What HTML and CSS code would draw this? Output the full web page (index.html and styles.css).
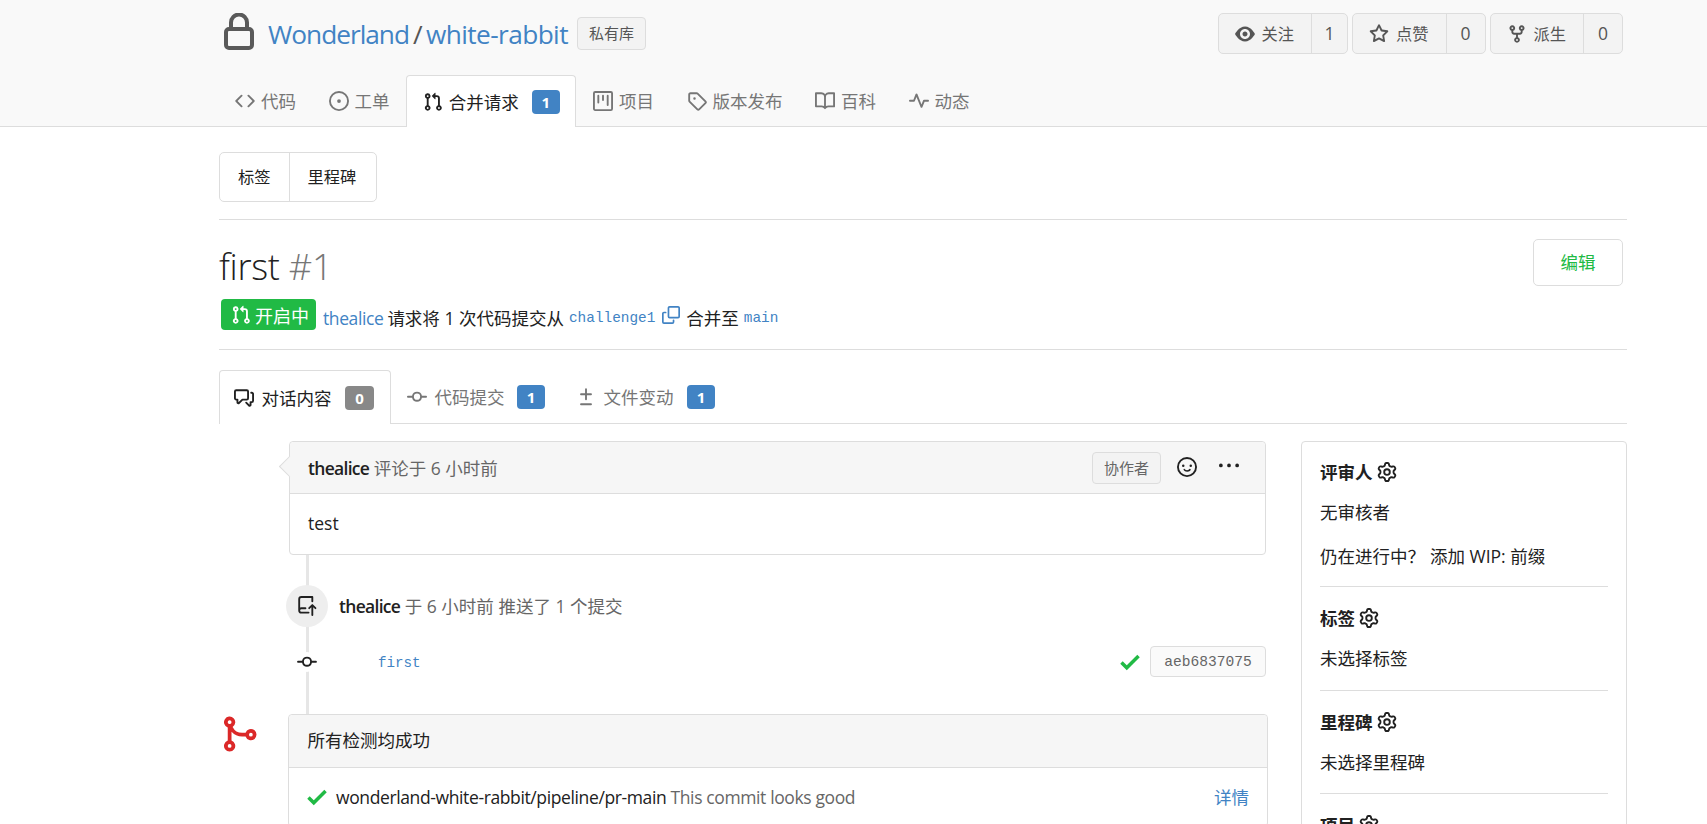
FILE: index.html
```html
<!DOCTYPE html>
<html lang="zh-CN">
<head>
    <meta charset="UTF-8">
    <meta name="viewport" content="width=device-width, initial-scale=1.0">
    <title>first #1 - Wonderland/white-rabbit</title>
    <link rel="stylesheet" href="styles.css">
</head>
<body>
    <svg class="sprite" xmlns="http://www.w3.org/2000/svg">
        <symbol id="i-eye" viewBox="0 0 16 16"><path d="M8.06 2C3 2 0 8 0 8s3 6 8.06 6C13 14 16 8 16 8s-3-6-7.94-6zM8 12c-2.2 0-4-1.78-4-4 0-2.2 1.8-4 4-4 2.22 0 4 1.8 4 4 0 2.22-1.78 4-4 4zm2-4c0 1.11-.89 2-2 2-1.11 0-2-.89-2-2 0-1.11.89-2 2-2 1.11 0 2 .89 2 2z"/></symbol>
        <symbol id="i-star" viewBox="0 0 16 16"><path d="M8 .25a.75.75 0 01.673.418l1.882 3.815 4.21.612a.75.75 0 01.416 1.279l-3.046 2.97.719 4.192a.75.75 0 01-1.088.791L8 12.347l-3.766 1.98a.75.75 0 01-1.088-.79l.72-4.194L.818 6.374a.75.75 0 01.416-1.28l4.21-.611L7.327.668A.75.75 0 018 .25zm0 2.445L6.615 5.5a.75.75 0 01-.564.41l-3.097.45 2.24 2.184a.75.75 0 01.216.664l-.528 3.084 2.769-1.456a.75.75 0 01.698 0l2.77 1.456-.53-3.084a.75.75 0 01.216-.664l2.24-2.183-3.096-.45a.75.75 0 01-.564-.41L8 2.694v.001z"/></symbol>
        <symbol id="i-fork" viewBox="0 0 16 16"><path d="M5 3.25a.75.75 0 11-1.5 0 .75.75 0 011.5 0zm0 2.122a2.25 2.25 0 10-1.5 0v.878A2.25 2.25 0 005.75 8.5h1.5v2.128a2.251 2.251 0 101.5 0V8.5h1.5a2.25 2.25 0 002.25-2.25v-.878a2.25 2.25 0 10-1.5 0v.878a.75.75 0 01-.75.75h-4.5A.75.75 0 015 6.25v-.878zm3.75 7.378a.75.75 0 11-1.5 0 .75.75 0 011.5 0zm3-8.75a.75.75 0 100-1.5.75.75 0 000 1.5z"/></symbol>
        <symbol id="i-code" viewBox="0 0 16 16"><path d="M4.72 3.22a.75.75 0 011.06 1.06L2.06 8l3.72 3.72a.75.75 0 11-1.06 1.06L.47 8.53a.75.75 0 010-1.06l4.25-4.25zm6.56 0a.75.75 0 10-1.06 1.06L13.94 8l-3.72 3.72a.75.75 0 101.06 1.06l4.25-4.25a.75.75 0 000-1.06l-4.25-4.25z"/></symbol>
        <symbol id="i-issue" viewBox="0 0 16 16"><path d="M8 9.5a1.5 1.5 0 100-3 1.5 1.5 0 000 3z"/><path d="M8 0a8 8 0 100 16A8 8 0 008 0zM1.5 8a6.5 6.5 0 1113 0 6.5 6.5 0 01-13 0z"/></symbol>
        <symbol id="i-pr" viewBox="0 0 16 16"><path d="M7.177 3.073L9.573.677A.25.25 0 0110 .854v4.792a.25.25 0 01-.427.177L7.177 3.427a.25.25 0 010-.354zM3.75 2.5a.75.75 0 100 1.5.75.75 0 000-1.5zm-2.25.75a2.25 2.25 0 113 2.122v5.256a2.251 2.251 0 11-1.5 0V5.372A2.25 2.25 0 011.5 3.25zM11 2.5h-1V4h1a1 1 0 011 1v5.628a2.251 2.251 0 101.5 0V5A2.5 2.5 0 0011 2.5zm1 10.25a.75.75 0 111.5 0 .75.75 0 01-1.5 0zM3.75 12a.75.75 0 100 1.5.75.75 0 000-1.5z"/></symbol>
        <symbol id="i-project" viewBox="0 0 16 16"><path d="M1.75 0A1.75 1.75 0 000 1.75v12.5C0 15.216.784 16 1.75 16h12.5A1.75 1.75 0 0016 14.25V1.75A1.75 1.75 0 0014.25 0H1.75zM1.5 1.75a.25.25 0 01.25-.25h12.5a.25.25 0 01.25.25v12.5a.25.25 0 01-.25.25H1.75a.25.25 0 01-.25-.25V1.75zM11.75 3a.75.75 0 00-.75.75v7.5a.75.75 0 001.5 0v-7.5a.75.75 0 00-.75-.75zm-8.25.75a.75.75 0 011.5 0v5.5a.75.75 0 01-1.5 0v-5.5zM8 3a.75.75 0 00-.75.75v3.5a.75.75 0 001.5 0v-3.5A.75.75 0 008 3z"/></symbol>
        <symbol id="i-tag" viewBox="0 0 16 16"><path d="M2.5 7.775V2.75a.25.25 0 01.25-.25h5.025a.25.25 0 01.177.073l6.25 6.25a.25.25 0 010 .354l-5.025 5.025a.25.25 0 01-.354 0l-6.25-6.25a.25.25 0 01-.073-.177zm-1.5 0V2.75C1 1.784 1.784 1 2.75 1h5.025c.464 0 .91.184 1.238.513l6.25 6.25a1.75 1.75 0 010 2.474l-5.026 5.026a1.75 1.75 0 01-2.474 0l-6.25-6.25A1.75 1.75 0 011 7.775zM6 5a1 1 0 100 2 1 1 0 000-2z"/></symbol>
        <symbol id="i-book" viewBox="0 0 16 16"><path d="M0 1.75A.75.75 0 01.75 1h4.253c1.227 0 2.317.59 3 1.501A3.744 3.744 0 0111.006 1h4.245a.75.75 0 01.75.75v10.5a.75.75 0 01-.75.75h-4.507a2.25 2.25 0 00-1.591.659l-.622.621a.75.75 0 01-1.06 0l-.622-.621A2.25 2.25 0 005.258 13H.75a.75.75 0 01-.75-.75V1.75zm8.755 3a2.25 2.25 0 012.25-2.25H14.5v9h-3.757c-.71 0-1.4.201-1.992.572l.004-7.322zm-1.504 7.324l.004-5.073-.002-2.253A2.25 2.25 0 005.003 2.5H1.5v9h3.757a3.75 3.75 0 011.994.574z"/></symbol>
        <symbol id="i-pulse" viewBox="0 0 16 16"><path d="M6 2a.75.75 0 01.696.471L10 10.731l1.304-3.26A.75.75 0 0112 7h3.25a.75.75 0 010 1.5h-2.742l-1.812 4.528a.75.75 0 01-1.392 0L6 4.77 4.696 8.03A.75.75 0 014 8.5H.75a.75.75 0 010-1.5h2.742l1.812-4.529A.75.75 0 016 2z"/></symbol>
        <symbol id="i-copy" viewBox="0 0 16 16"><path d="M0 6.75C0 5.784.784 5 1.75 5h1.5a.75.75 0 010 1.5h-1.5a.25.25 0 00-.25.25v7.5c0 .138.112.25.25.25h7.5a.25.25 0 00.25-.25v-1.5a.75.75 0 011.5 0v1.5A1.75 1.75 0 019.25 16h-7.5A1.75 1.75 0 010 14.25v-7.5z"/><path d="M5 1.75C5 .784 5.784 0 6.75 0h7.5C15.216 0 16 .784 16 1.75v7.5A1.75 1.75 0 0114.25 11h-7.5A1.75 1.75 0 015 9.25v-7.5zm1.75-.25a.25.25 0 00-.25.25v7.5c0 .138.112.25.25.25h7.5a.25.25 0 00.25-.25v-7.5a.25.25 0 00-.25-.25h-7.5z"/></symbol>
        <symbol id="i-discussion" viewBox="0 0 16 16"><path d="M1.5 2.75a.25.25 0 01.25-.25h8.5a.25.25 0 01.25.25v5.5a.25.25 0 01-.25.25h-3.5a.75.75 0 00-.53.22L3.5 11.44V9.25a.75.75 0 00-.75-.75h-1a.25.25 0 01-.25-.25v-5.5zM1.75 1A1.75 1.75 0 000 2.75v5.5C0 9.216.784 10 1.75 10H2v1.543a1.457 1.457 0 002.487 1.03L7.061 10h3.189A1.75 1.75 0 0012 8.25v-5.5A1.75 1.75 0 0010.25 1h-8.5zM14.5 4.75a.25.25 0 00-.25-.25h-.5a.75.75 0 110-1.5h.5c.966 0 1.75.784 1.75 1.75v5.5A1.75 1.75 0 0114.25 12H14v1.543a1.457 1.457 0 01-2.487 1.03L9.22 12.28a.75.75 0 111.06-1.06l2.22 2.22v-2.19a.75.75 0 01.75-.75h1a.25.25 0 00.25-.25v-5.5z"/></symbol>
        <symbol id="i-commit" viewBox="0 0 16 16"><path d="M10.5 7.75a2.5 2.5 0 11-5 0 2.5 2.5 0 015 0zm1.43.75a4.002 4.002 0 01-7.86 0H.75a.75.75 0 110-1.5h3.32a4.001 4.001 0 017.86 0h3.32a.75.75 0 110 1.5h-3.32z"/></symbol>
        <symbol id="i-diff" viewBox="0 0 16 16"><path d="M8.75 1.75a.75.75 0 00-1.5 0V5H4a.75.75 0 000 1.5h3.25v3.25a.75.75 0 001.5 0V6.5H12A.75.75 0 0012 5H8.75V1.75zM4 13a.75.75 0 000 1.5h8a.75.75 0 100-1.5H4z"/></symbol>
        <symbol id="i-smiley" viewBox="0 0 16 16"><path d="M1.5 8a6.5 6.5 0 1113 0 6.5 6.5 0 01-13 0zM8 0a8 8 0 100 16A8 8 0 008 0zM5 8a1 1 0 100-2 1 1 0 000 2zm7-1a1 1 0 11-2 0 1 1 0 012 0zM5.32 9.636a.75.75 0 011.038.175l.007.009c.103.118.22.222.35.31.264.178.683.37 1.285.37.602 0 1.02-.192 1.285-.371.13-.088.247-.192.35-.31l.007-.008a.75.75 0 111.222.87c-.16.166-.338.316-.53.445-.63.418-1.37.638-2.127.629-.946 0-1.652-.308-2.126-.63a3.32 3.32 0 01-.715-.657.75.75 0 01.183-1.044z"/></symbol>
        <symbol id="i-kebab" viewBox="0 0 16 16"><path d="M8 9a1.5 1.5 0 100-3 1.5 1.5 0 000 3zM1.5 9a1.5 1.5 0 100-3 1.5 1.5 0 000 3zm13 0a1.5 1.5 0 100-3 1.5 1.5 0 000 3z"/></symbol>
        <symbol id="i-gear" viewBox="0 0 16 16"><path d="M7.429 1.525a6.593 6.593 0 011.142 0c.036.003.108.036.137.146l.289 1.105c.147.56.55.967.997 1.189.174.086.341.183.501.29.417.278.97.423 1.53.27l1.102-.303c.11-.03.175.016.195.046.219.31.41.641.573.989.014.031.022.11-.059.19l-.815.806c-.411.406-.562.957-.53 1.456a4.588 4.588 0 010 .582c-.032.499.119 1.05.53 1.456l.815.806c.08.08.073.159.059.19a6.494 6.494 0 01-.573.99c-.02.029-.086.074-.195.045l-1.103-.303c-.559-.153-1.112-.008-1.529.27-.16.107-.327.204-.5.29-.449.222-.851.628-.998 1.189l-.289 1.105c-.029.11-.101.143-.137.146a6.613 6.613 0 01-1.142 0c-.036-.003-.108-.037-.137-.146l-.289-1.105c-.147-.56-.55-.967-.997-1.189a4.502 4.502 0 01-.501-.29c-.417-.278-.97-.423-1.53-.27l-1.102.303c-.11.03-.175-.016-.195-.046a6.492 6.492 0 01-.573-.989c-.014-.031-.022-.11.059-.19l.815-.806c.411-.406.562-.957.53-1.456a4.587 4.587 0 010-.582c.032-.499-.119-1.05-.53-1.456l-.815-.806c-.08-.08-.073-.159-.059-.19a6.44 6.44 0 01.573-.99c.02-.029.086-.075.195-.045l1.103.303c.559.153 1.112.008 1.529-.27.16-.107.327-.204.5-.29.449-.222.851-.628.998-1.189l.289-1.105c.029-.11.101-.143.137-.146zM8 0c-.236 0-.47.01-.701.03-.743.065-1.29.615-1.458 1.261l-.29 1.106c-.017.066-.078.158-.211.224a5.994 5.994 0 00-.668.386c-.123.082-.233.09-.3.071L3.27 2.776c-.644-.177-1.392.02-1.82.63a7.977 7.977 0 00-.704 1.217c-.315.675-.111 1.422.363 1.891l.815.806c.05.048.098.147.088.294a6.084 6.084 0 000 .772c.01.147-.038.246-.088.294l-.815.806c-.474.469-.678 1.216-.363 1.891.2.428.436.835.704 1.218.428.609 1.176.806 1.82.63l1.103-.303c.066-.019.176-.011.299.071.213.143.436.272.668.386.133.066.194.158.212.224l.289 1.106c.169.646.715 1.196 1.458 1.26a8.094 8.094 0 001.402 0c.743-.064 1.29-.614 1.458-1.26l.29-1.106c.017-.066.078-.158.211-.224a5.98 5.98 0 00.668-.386c.123-.082.233-.09.3-.071l1.102.302c.644.177 1.392-.02 1.82-.63.268-.382.505-.789.704-1.217.315-.675.111-1.422-.364-1.891l-.814-.806c-.05-.048-.098-.147-.088-.294a6.1 6.1 0 000-.772c-.01-.147.039-.246.088-.294l.814-.806c.475-.469.679-1.216.364-1.891a7.992 7.992 0 00-.704-1.218c-.428-.609-1.176-.806-1.82-.63l-1.103.303c-.066.019-.176.011-.299-.071a5.991 5.991 0 00-.668-.386c-.133-.066-.194-.158-.212-.224L10.16 1.29C9.99.645 9.444.095 8.701.031A8.094 8.094 0 008 0zm1.5 8a1.5 1.5 0 11-3 0 1.5 1.5 0 013 0zM11 8a3 3 0 11-6 0 3 3 0 016 0z"/></symbol>
        <symbol id="i-check" viewBox="0 0 12 16"><path d="M12 5l-8 8-4-4 1.5-1.5L4 10l6.5-6.5L12 5z"/></symbol>
        <symbol id="i-push" viewBox="0 0 16 16"><path d="M1 2.5A2.5 2.5 0 013.5 0h8.75a.75.75 0 01.75.75v3.5a.75.75 0 01-1.5 0V1.5h-8a1 1 0 00-1 1v6.708A2.492 2.492 0 013.5 9h3.25a.75.75 0 010 1.5H3.5a1 1 0 100 2h5.75a.75.75 0 010 1.5H3.5A2.5 2.5 0 011 11.5v-9zm13.23 7.79a.75.75 0 001.06-1.06l-2.505-2.505a.75.75 0 00-1.06 0L9.22 9.229a.75.75 0 001.06 1.061l1.225-1.224v6.184a.75.75 0 001.5 0V9.066l1.224 1.224z"/></symbol>
        <symbol id="i-merge" viewBox="0 0 16 16"><path d="M5 3.254V3.25v.005a.75.75 0 110-.005v.004zm.45 1.9a2.25 2.25 0 10-1.95.218v5.256a2.25 2.25 0 101.5 0V7.123A5.735 5.735 0 009.25 9h1.378a2.251 2.251 0 100-1.5H9.25a4.25 4.25 0 01-3.8-2.346zM12.75 9a.75.75 0 100-1.5.75.75 0 000 1.5zm-8.5 4.5a.75.75 0 100-1.5.75.75 0 000 1.5z"/></symbol>
    </svg>

    <div class="header-wrapper">
        <div class="repo-head">
            <div class="repo-title">
                <svg class="lock-icon" viewBox="0 0 30 37"><rect x="2" y="16" width="26" height="19" rx="3"/><path d="M7 16V9.5a8 8 0 0 1 16 0V16"/></svg>
                <a class="link owner" href="#">Wonderland</a>
                <span class="slash">/</span>
                <a class="link" href="#">white-rabbit</a>
                <span class="private-label">私有库</span>
            </div>
            <div class="repo-buttons">
                <div class="count-btn">
                    <span class="count-main"><svg class="icon"><use href="#i-eye"/></svg>关注</span>
                    <span class="count-num one">1</span>
                </div>
                <div class="count-btn">
                    <span class="count-main"><svg class="icon"><use href="#i-star"/></svg>点赞</span>
                    <span class="count-num">0</span>
                </div>
                <div class="count-btn">
                    <span class="count-main"><svg class="icon"><use href="#i-fork"/></svg>派生</span>
                    <span class="count-num">0</span>
                </div>
            </div>
        </div>
        <div class="repo-tabs">
            <a class="tab-item" href="#"><svg class="icon"><use href="#i-code"/></svg>代码</a>
            <a class="tab-item" href="#"><svg class="icon"><use href="#i-issue"/></svg>工单</a>
            <a class="tab-item active" href="#"><svg class="icon"><use href="#i-pr"/></svg>合并请求<span class="count blue">1</span></a>
            <a class="tab-item" href="#"><svg class="icon"><use href="#i-project"/></svg>项目</a>
            <a class="tab-item" href="#"><svg class="icon"><use href="#i-tag"/></svg>版本发布</a>
            <a class="tab-item" href="#"><svg class="icon"><use href="#i-book"/></svg>百科</a>
            <a class="tab-item" href="#"><svg class="icon"><use href="#i-pulse"/></svg>动态</a>
        </div>
    </div>

    <div class="container">
        <div class="btn-group">
            <a href="#">标签</a>
            <a href="#">里程碑</a>
        </div>
        <hr class="divider first-divider">

        <div class="title-row">
            <h1>first <span class="index">#1</span></h1>
            <a class="edit-btn" href="#">编辑</a>
        </div>
        <div class="meta-row">
            <span class="status-label"><svg class="icon"><use href="#i-pr"/></svg>开启中</span>
            <a class="link author" href="#">thealice</a>
            <span>请求将 1 次代码提交从</span>
            <code class="branch">challenge1</code>
            <svg class="icon copy-icon"><use href="#i-copy"/></svg>
            <span>合并至</span>
            <code class="branch">main</code>
        </div>
        <hr class="divider meta-divider">

        <div class="pull-tabs">
            <a class="pull-tab active" href="#"><svg class="icon"><use href="#i-discussion"/></svg>对话内容<span class="count grey">0</span></a>
            <a class="pull-tab" href="#"><svg class="icon"><use href="#i-commit"/></svg>代码提交<span class="count blue">1</span></a>
            <a class="pull-tab" href="#"><svg class="icon"><use href="#i-diff"/></svg>文件变动<span class="count blue">1</span></a>
        </div>

        <div class="pull-grid">
            <div class="timeline">
                <div class="comment">
                    <div class="comment-head">
                        <span><strong>thealice</strong> <span class="muted">评论于 6 小时前</span></span>
                        <div class="comment-actions">
                            <span class="role-label">协作者</span>
                            <svg class="icon smiley"><use href="#i-smiley"/></svg>
                            <svg class="icon kebab"><use href="#i-kebab"/></svg>
                        </div>
                    </div>
                    <div class="comment-body">test</div>
                </div>

                <div class="event">
                    <span class="event-badge"><svg class="icon"><use href="#i-push"/></svg></span>
                    <span><strong>thealice</strong> <span class="muted">于 6 小时前 推送了 1 个提交</span></span>
                </div>

                <div class="commit-row">
                    <svg class="icon commit-dot"><use href="#i-commit"/></svg>
                    <a class="commit-msg" href="#">first</a>
                    <svg class="icon check"><use href="#i-check"/></svg>
                    <a class="sha" href="#">aeb6837075</a>
                </div>

                <div class="merge-box">
                    <svg class="icon merge-icon"><use href="#i-merge"/></svg>
                    <div class="merge-head">所有检测均成功</div>
                    <div class="merge-row">
                        <svg class="icon check"><use href="#i-check"/></svg>
                        <span class="check-name">wonderland-white-rabbit/pipeline/pr-main <span class="muted">This commit looks good</span></span>
                        <a class="link" href="#">详情</a>
                    </div>
                </div>
            </div>

            <div class="sidebar">
                <div class="side-section">
                    <h4>评审人<svg class="icon"><use href="#i-gear"/></svg></h4>
                    <p>无审核者</p>
                    <p class="wip">仍在进行中？<span class="wip-add">添加 WIP: 前缀</span></p>
                </div>
                <div class="side-section">
                    <h4>标签<svg class="icon"><use href="#i-gear"/></svg></h4>
                    <p>未选择标签</p>
                </div>
                <div class="side-section">
                    <h4>里程碑<svg class="icon"><use href="#i-gear"/></svg></h4>
                    <p>未选择里程碑</p>
                </div>
                <div class="side-section">
                    <h4>项目<svg class="icon"><use href="#i-gear"/></svg></h4>
                </div>
            </div>
        </div>
    </div>
</body>
</html>
```

FILE: styles.css
```css
html, body {
    margin: 0;
    padding: 0;
    height: 100%;
    overflow: hidden;
}
body {
    font-family: 'Open Sans', 'Noto Sans CJK SC', sans-serif;
    font-size: 17.5px;
    line-height: 24px;
    color: #212121;
    background-color: #fff;
}
a {
    text-decoration: none;
    color: inherit;
}
.sprite {
    display: none;
}
.icon {
    width: 20px;
    height: 20px;
    fill: currentColor;
    fill-rule: evenodd;
    flex-shrink: 0;
}
.link {
    color: #4183c4;
}
.muted {
    color: #666;
}
strong {
    font-weight: 600;
    letter-spacing: -0.7px;
}

/* repo header */
.header-wrapper {
    height: 126px;
    background-color: #f9f9f9;
    border-bottom: 1px solid #ddd;
}
.repo-head {
    display: flex;
    justify-content: space-between;
    width: 1404px;
    height: 75px;
    margin-left: 219px;
    padding-top: 13px;
    box-sizing: border-box;
}
.repo-title {
    display: flex;
    align-items: flex-start;
    font-size: 26.25px;
    line-height: 42px;
    letter-spacing: -0.6px;
}
.owner {
    letter-spacing: -1px;
}
.lock-icon {
    width: 30px;
    height: 37px;
    margin: 0 14px 0 5px;
    fill: none;
    stroke: #5a5a5a;
    stroke-width: 4;
}
.slash {
    margin: 0 4px;
    color: #555;
}
.private-label {
    margin: 4px 0 0 9px;
    padding: 0 11px;
    font-size: 15px;
    line-height: 31px;
    letter-spacing: 0;
    color: #555;
    background-color: #f3f3f3;
    border: 1px solid #ddd;
    border-radius: 4px;
}
.repo-buttons {
    display: flex;
    gap: 4px;
}
.count-btn {
    display: flex;
    height: 41px;
    box-sizing: border-box;
    color: #555;
    background-color: #f3f3f3;
    border: 1px solid #ddd;
    border-radius: 5px;
    font-size: 16.25px;
}
.count-main {
    display: flex;
    align-items: center;
    gap: 7px;
    padding: 0 17px 0 16px;
    border-right: 1px solid #ddd;
}
.count-num {
    width: 38px;
    text-align: center;
    line-height: 39px;
    font-size: 17.5px;
}
.count-num.one {
    width: 35px;
}
.repo-tabs {
    display: flex;
    height: 52px;
    margin-left: 218px;
}
.tab-item {
    display: flex;
    align-items: center;
    gap: 6px;
    padding: 0 16.25px;
    height: 51px;
    color: #767676;
}
.tab-item:first-child {
    padding-left: 17px;
}
.tab-item.active {
    height: 52px;
    padding: 0 15px 0 16px;
    color: #212121;
    background-color: #fff;
    border: 1px solid #ddd;
    border-bottom: none;
    border-radius: 4px 4px 0 0;
    box-sizing: border-box;
    width: 170px;
}
.tab-item.active + .tab-item {
    padding-left: 17.25px;
}
.count {
    display: inline-block;
    width: 28px;
    height: 24px;
    margin-left: 7px;
    text-align: center;
    font-size: 15px;
    font-weight: 700;
    line-height: 24px;
    color: #fff;
    border-radius: 4px;
}
.count.blue {
    background-color: #4183c4;
}
.count.grey {
    width: 29px;
    background-color: #888;
}

/* page body */
.container {
    width: 1408px;
    margin-left: 219px;
    padding-top: 25px;
}
.btn-group {
    display: inline-flex;
    height: 50px;
    box-sizing: border-box;
    border: 1px solid #ddd;
    border-radius: 5px;
    font-size: 16.25px;
    line-height: 48px;
    vertical-align: top;
}
.btn-group a {
    padding: 0 18px;
}
.btn-group a + a {
    padding-right: 20px;
    border-left: 1px solid #ddd;
}
.divider {
    height: 1px;
    margin: 0;
    border: none;
    background-color: #ddd;
}
.first-divider {
    margin-top: 17px;
}
.title-row {
    display: flex;
    justify-content: space-between;
    align-items: center;
    height: 47px;
    margin: 19px 4px 0 0;
}
h1 {
    margin: 0;
    padding-top: 7px;
    font-size: 36.25px;
    font-weight: 300;
    line-height: 50px;
    letter-spacing: -0.3px;
}
.index {
    color: #767676;
}
.edit-btn {
    width: 90px;
    height: 47px;
    box-sizing: border-box;
    text-align: center;
    line-height: 45px;
    font-size: 17.5px;
    color: #21ba45;
    border: 1px solid #ddd;
    border-radius: 5px;
}
.meta-row {
    display: flex;
    align-items: center;
    height: 31px;
    margin: 13px 0 0 2px;
    gap: 5px;
}
.meta-row > span,
.meta-row > a,
.meta-row > code {
    margin-top: 7px;
}
.meta-row > .status-label {
    display: flex;
    align-items: center;
    gap: 4px;
    width: 95px;
    height: 31px;
    margin-top: 0;
    padding: 2px 0 0 10px;
    box-sizing: border-box;
    font-size: 18px;
    color: #fff;
    background-color: #21ba45;
    border-radius: 4px;
}
.status-label .icon {
    margin-top: -2px;
}
.author {
    margin: 0 -1px 0 2px;
    letter-spacing: -0.4px;
}
.branch {
    font-family: 'Liberation Mono', monospace;
    font-size: 14.4px;
    color: #4183c4;
}
.copy-icon {
    width: 18px;
    height: 18px;
    margin: 1px 1px 0 2px;
    color: #4183c4;
}
.meta-divider {
    margin-top: 19px;
}
.pull-tabs {
    display: flex;
    height: 54px;
    margin-top: 20px;
    border-bottom: 1px solid #ddd;
    box-sizing: border-box;
}
.pull-tab {
    display: flex;
    align-items: center;
    gap: 7.5px;
    padding: 0 15px 0 16px;
    color: #767676;
    white-space: nowrap;
}
.pull-tab .count {
    margin-left: 5px;
}
.pull-tab.active .count,
.pull-tab:last-child .count {
    margin-left: 6px;
}
.pull-tab.active {
    height: 54px;
    width: 172px;
    box-sizing: border-box;
    color: #212121;
    background-color: #fff;
    border: 1px solid #ddd;
    border-bottom: none;
    border-radius: 4px 4px 0 0;
    padding: 0 14px;
}
.pull-grid {
    display: grid;
    grid-template-columns: 1049px 326px;
    column-gap: 33px;
    margin-top: 17px;
}

/* timeline */
.timeline {
    position: relative;
}
.timeline::before {
    content: '';
    position: absolute;
    left: 87px;
    top: 100px;
    width: 3px;
    height: 180px;
    background-color: #e6e6e6;
}
.comment {
    position: relative;
    margin: 0 2px 0 70px;
    border: 1px solid #ddd;
    border-radius: 4px;
    background-color: #fff;
}
.comment::before {
    content: '';
    position: absolute;
    left: -8px;
    top: 17px;
    width: 14px;
    height: 14px;
    background-color: #f6f6f6;
    border-left: 1px solid #ddd;
    border-bottom: 1px solid #ddd;
    transform: rotate(45deg);
}
.comment-head {
    display: flex;
    justify-content: space-between;
    align-items: center;
    height: 51px;
    padding: 0 26px 0 18px;
    background-color: #f6f6f6;
    border-bottom: 1px solid #ddd;
    border-radius: 4px 4px 0 0;
}
.comment-head > span {
    position: relative;
}
.comment-actions {
    display: flex;
    align-items: center;
}
.role-label {
    padding: 0 11px;
    font-size: 15px;
    line-height: 30px;
    color: #666;
    background-color: #f3f3f3;
    border: 1px solid #ddd;
    border-radius: 4px;
}
.smiley {
    margin: -2px 0 0 16px;
}
.kebab {
    margin: -4px 0 0 22px;
}
.comment-body {
    height: 60px;
    padding: 0 18px;
    line-height: 58px;
}
.event {
    position: relative;
    display: flex;
    align-items: center;
    gap: 11px;
    height: 42px;
    margin: 30px 0 0 67px;
}
.event-badge {
    display: flex;
    align-items: center;
    justify-content: center;
    width: 42px;
    height: 42px;
    border-radius: 50%;
    background-color: #eee;
}
.commit-row {
    position: relative;
    display: flex;
    align-items: center;
    height: 31px;
    margin: 19px 2px 0 78px;
}
.commit-dot {
    border-radius: 50%;
    background-color: #fff;
}
.commit-msg {
    margin-left: 61px;
    padding-top: 2px;
    font-family: 'Liberation Mono', monospace;
    font-size: 14.2px;
    color: #4183c4;
}
.check {
    width: 26px;
    height: 26px;
    color: #21ba45;
}
.commit-row .check {
    margin-left: auto;
}
.sha {
    width: 116px;
    height: 31px;
    margin-left: 7px;
    box-sizing: border-box;
    text-align: center;
    font-family: 'Liberation Mono', monospace;
    font-size: 14.6px;
    line-height: 31px;
    color: #666;
    background-color: #fafafa;
    border: 1px solid #ddd;
    border-radius: 4px;
}
.merge-box {
    position: relative;
    margin: 37px 0 0 68.5px;
    border: 1px solid #ddd;
    border-radius: 4px;
    background-color: #fff;
}
.merge-icon {
    position: absolute;
    left: -70px;
    top: -1px;
    width: 40px;
    height: 40px;
    color: #db2828;
}
.merge-head {
    height: 52px;
    padding: 0 19px;
    line-height: 50px;
    background-color: #f6f6f6;
    border-bottom: 1px solid #ddd;
    border-radius: 4px 4px 0 0;
}
.merge-row {
    display: flex;
    align-items: center;
    height: 58px;
    padding: 0 18px 0 19px;
}
.merge-row .check {
    margin-left: -3.5px;
}
.check-name {
    margin-left: 6px;
    flex: 1;
    letter-spacing: -0.38px;
}

/* sidebar */
.sidebar {
    align-self: start;
    padding: 0 18px;
    border: 1px solid #ddd;
    border-radius: 4px;
    height: 500px;
}
.side-section {
    padding: 19px 0 19.5px;
    border-bottom: 1px solid #ddd;
}
.side-section:first-child {
    padding: 18px 0 18px;
}
.side-section:last-child {
    border-bottom: none;
}
.side-section h4 {
    display: flex;
    align-items: center;
    gap: 4px;
    margin: 0;
    font-size: 17.5px;
    font-weight: 700;
    line-height: 24px;
}
.side-section p {
    margin: 16px 0 0;
    line-height: 24px;
}
.side-section .wip {
    margin-top: 20px;
}
.wip-add {
    margin-left: 5px;
}
```
